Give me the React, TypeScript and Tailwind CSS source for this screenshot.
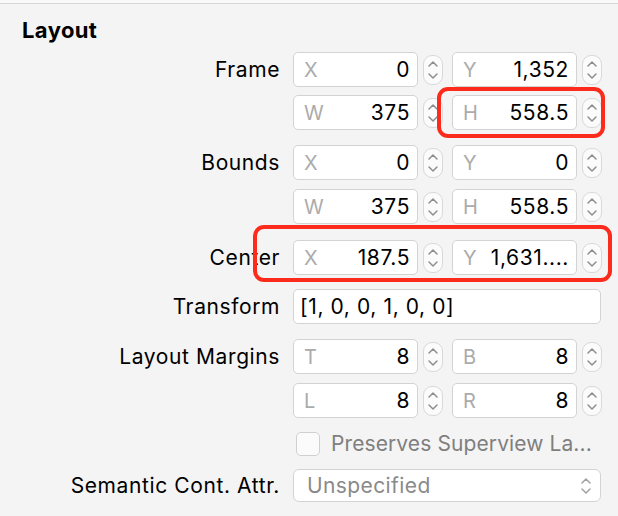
import type { ReactNode } from 'react';

const FONT = { fontFamily: 'Inter, "Noto Sans", "Liberation Sans", sans-serif' };

function Stepper() {
    return (
        <div className="w-[20px] h-[30px] rounded-[9px] border border-[#d9d9d9] bg-[#fbfbfb] flex items-center justify-center">
            <svg width="12" height="24" viewBox="0 0 12 24" fill="none" stroke="#8e8e8e" strokeWidth="1.5" strokeLinecap="round" strokeLinejoin="round">
                <polyline points="2,8 6,4 10,8" />
                <polyline points="2,16 6,20 10,16" />
            </svg>
        </div>
    );
}

function NumField({ tag, value }: { tag: string; value: string }) {
    return (
        <div className="flex items-center gap-[5px]">
            <div className="w-[125px] h-[35px] bg-white border border-[#d3d3d3] rounded-[5px] flex items-center justify-between pl-[10px] pr-[7px]">
                <span className="text-[20px] text-[#ababab]">{tag}</span>
                <span className="text-[21px] tracking-[0.6px] text-black">{value}</span>
            </div>
            <Stepper />
        </div>
    );
}

function Row({ label, children, className = '' }: { label?: string; children: ReactNode; className?: string }) {
    return (
        <div className={`flex items-center ${className}`}>
            <div className="w-[280px] text-right text-[21px] tracking-[0.6px] text-black whitespace-nowrap">{label}</div>
            <div className="ml-[13px] flex items-center gap-[9px]">{children}</div>
        </div>
    );
}

export default function App() {
    return (
        <div className="relative w-[618px] h-[516px] bg-[#f4f4f4] overflow-hidden" style={FONT}>
            <div className="h-[3px] bg-[#f9f9f9] border-b border-[#d6d6d6] box-content" />

            <div className="mt-[14px] h-[24px] leading-[24px] pl-[22px] text-[22px] tracking-[0.4px] font-bold text-black">Layout</div>

            <Row label="Frame" className="mt-[10px]">
                <NumField tag="X" value="0" />
                <NumField tag="Y" value="1,352" />
            </Row>
            <Row className="mt-[8px]">
                <NumField tag="W" value="375" />
                <NumField tag="H" value="558.5" />
            </Row>

            <Row label="Bounds" className="mt-[15px]">
                <NumField tag="X" value="0" />
                <NumField tag="Y" value="0" />
            </Row>
            <Row className="mt-[9px]">
                <NumField tag="W" value="375" />
                <NumField tag="H" value="558.5" />
            </Row>

            <Row label="Center" className="mt-[16px]">
                <NumField tag="X" value="187.5" />
                <NumField tag="Y" value="1,631...." />
            </Row>

            <Row label="Transform" className="mt-[14px]">
                <div className="w-[308px] h-[35px] bg-white border border-[#d3d3d3] rounded-[5px] flex items-center pl-[6px] text-[21px] tracking-[0.6px] text-black">
                    [1, 0, 0, 1, 0, 0]
                </div>
            </Row>

            <Row label="Layout Margins" className="mt-[15px]">
                <NumField tag="T" value="8" />
                <NumField tag="B" value="8" />
            </Row>
            <Row className="mt-[9px]">
                <NumField tag="L" value="8" />
                <NumField tag="R" value="8" />
            </Row>

            <div className="mt-[14px] flex items-center pl-[296px] h-[24px]">
                <div className="w-[24px] h-[24px] rounded-[5px] border border-[#cfcfcf] bg-[#fbfbfb]" />
                <span className="ml-[11px] text-[21px] tracking-[0.1px] text-[#7f7f7f] whitespace-nowrap">Preserves Superview La...</span>
            </div>

            <Row label="Semantic Cont. Attr." className="mt-[13px]">
                <div className="w-[308px] h-[33px] bg-white border border-[#d3d3d3] rounded-[6px] flex items-center justify-between pl-[13px] pr-[8px] text-[21px] tracking-[0.4px] text-[#8a8a8a]">
                    <span>Unspecified</span>
                    <svg width="12" height="24" viewBox="0 0 12 24" fill="none" stroke="#a0a0a0" strokeWidth="1.5" strokeLinecap="round" strokeLinejoin="round">
                        <polyline points="2,9 6,5 10,9" />
                        <polyline points="2,15 6,19 10,15" />
                    </svg>
                </div>
            </Row>

            {/* red annotation boxes */}
            <div className="absolute left-[437px] top-[87px] w-[168px] h-[51px] border-4 border-[#fc2b1c] rounded-[11px]" />
            <div className="absolute left-[253px] top-[225px] w-[359px] h-[57px] border-4 border-[#fc2b1c] rounded-[11px]" />
        </div>
    );
}
